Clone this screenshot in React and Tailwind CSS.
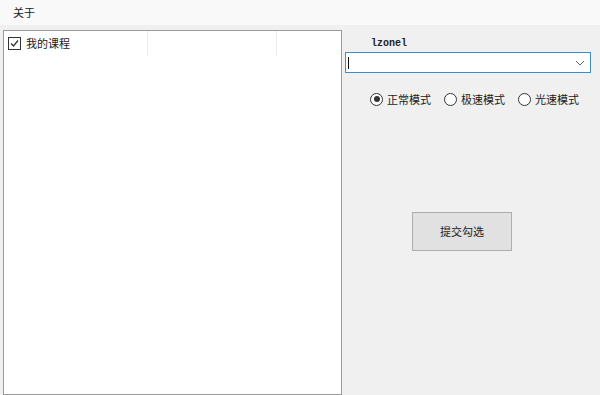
import React from "react";

const cjk = { fontFamily: '"Noto Sans CJK SC", "Noto Sans", sans-serif' };

const Radio = ({ label, checked }) => (
  <label className="flex items-center gap-[4px] text-[11px] text-[#1a1a1a]">
    <span className="flex h-[13px] w-[13px] items-center justify-center rounded-full border border-[#333333] bg-white">
      {checked && <span className="h-[6px] w-[6px] rounded-full bg-[#333333]" />}
    </span>
    <span className="leading-[14px]">{label}</span>
  </label>
);

const App = () => {
  return (
    <div
      className="flex h-[395px] w-[600px] flex-col overflow-hidden bg-[#f0f0f0]"
      style={cjk}
    >
      {/* Menu bar */}
      <div className="flex h-[25px] items-center bg-[#f9f9f9] pl-[13px] text-[11px] text-[#1a1a1a]">
        关于
      </div>

      <div className="flex flex-1 pt-[5px]">
        {/* List view */}
        <div className="ml-[3px] h-[365px] w-[339px] border border-[#9a9a9a] bg-white">
          <div className="flex h-[25px]">
            <div className="flex w-[144px] items-center gap-[5px] border-r border-[#ececec] pl-[4px]">
              <span className="flex h-[13px] w-[13px] items-center justify-center border border-[#333333] bg-white">
                <svg width="11" height="11" viewBox="0 0 11 11">
                  <path d="M2 5.5 L4.5 8 L9 2.5" fill="none" stroke="#333333" strokeWidth="1.3" />
                </svg>
              </span>
              <span className="text-[11px] text-[#1a1a1a]">我的课程</span>
            </div>
            <div className="w-[129px] border-r border-[#ececec]" />
          </div>
        </div>

        {/* Right panel */}
        <div className="ml-[3px] flex w-[246px] flex-col">
          <div
            className="mt-[8px] h-[12px] pl-[26px] text-[10px] font-bold leading-[12px] text-[#222222]"
            style={{ fontFamily: '"Liberation Mono", monospace' }}
          >
            lzonel
          </div>
          <div className="mt-[2px] flex h-[21px] items-center justify-between border border-[#3d8ccc] bg-white pl-[2px] pr-[5px]">
            <span className="h-[12px] w-[1px] bg-[#111111]" />
            <svg width="10" height="6" viewBox="0 0 10 6">
              <path d="M1 1 L5 5 L9 1" fill="none" stroke="#6a6a6a" strokeWidth="1" />
            </svg>
          </div>

          <div className="ml-[25px] mt-[19px] flex gap-[13px]">
            <Radio label="正常模式" checked />
            <Radio label="极速模式" />
            <Radio label="光速模式" />
          </div>

          <button className="ml-[67px] mt-[106px] h-[39px] w-[100px] border border-[#adadad] bg-[#e1e1e1] text-[11px] text-[#1a1a1a]">
            提交勾选
          </button>
        </div>
      </div>
    </div>
  );
};

export default App;
